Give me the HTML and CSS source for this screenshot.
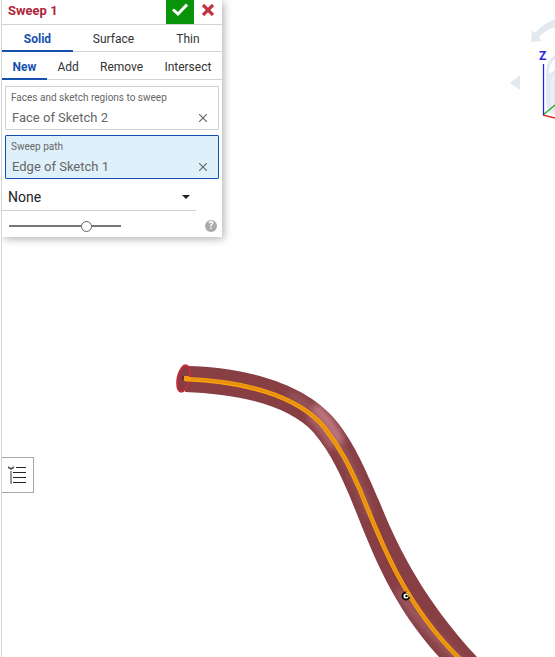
FILE: index.html
```html
<!DOCTYPE html>
<html lang="en">
<head>
<meta charset="utf-8">
<title>Sweep 1</title>
<link rel="stylesheet" href="styles.css">
</head>
<body>
<main class="workspace">
  <svg class="model" width="600" height="700" viewBox="0 0 600 700" role="img" aria-label="Swept tube">
    <defs>
      <filter id="soft" x="-50%" y="-50%" width="200%" height="200%"><feGaussianBlur stdDeviation="3"/></filter>
      <clipPath id="tube"><path d="M188 366C240 367 300 381 332 416C352 438 364 466 380 503C396 543 422 598 477 657L516 698H476L439 657C388 601 369 543 350 497C341 476 331 453 314 433C288 404 236 394 185 392Z"/></clipPath>
    </defs>
    <g clip-path="url(#tube)">
      <path fill="#873f44" d="M170 350H600V700H170Z"/>
      <g fill="none" filter="url(#soft)">
        <path stroke="#96575d" stroke-width="7" d="M290 394Q322 413 339 444T370 515"/>
        <path stroke="#c47c84" stroke-width="8" d="M315 406Q331 420 341 442"/>
        <path stroke="#b57078" stroke-width="5" d="M309 416Q322 428 332 448"/>
        <path stroke="#9c5a60" stroke-width="8" d="M398 590Q420 625 470 670"/>
      </g>
    </g>
    <ellipse cx="183.500" cy="378.500" rx="6" ry="13.500" transform="rotate(12 183.500 378.500)" fill="#873b43" stroke="#c92a38" stroke-width="1.800"/>
    <path fill="none" stroke="#fba50d" stroke-width="4.500" d="M185 379C240 381 296 394 324 427C342 450 350 468 360 490C378 534 402 602 458 657L500 698"/>
    <path fill="none" stroke="#e8910f" stroke-width="2.600" d="M190 379C240 381 296 394 324 427C342 450 350 468 360 490C378 534 402 602 458 657L500 698"/>
    <path fill="#6e2b31" d="M182 376h3v4h-3z"/>
    <path fill="#f29a0c" d="M184 376h5v5h-5z"/>
    <circle cx="406" cy="596" r="3.500" fill="#fff" stroke="#000" stroke-width="1.800"/>
    <circle cx="406.500" cy="596" r="1.200"/>
    <path fill="none" stroke="#f5a623" stroke-width="2" d="M406 592q4 1 4 5"/>
  </svg>

  <svg class="view-cube" width="55" height="130" viewBox="0 0 55 130" role="img" aria-label="View orientation">
    <path fill="#e3eaef" d="M10 83l10-8v15zM31 42l1-12 3 3Q44 23 55 19v8Q46 30 39 37l3 4z"/>
    <path fill="#e3eaef" fill-rule="evenodd" d="M55 55Q46 60 46 74V104Q47 112 55 114zM55 59V69Q52 73 49 73Q49 63 55 59z"/>
    <path fill="none" stroke="#f7f9fb" stroke-width="1" d="M52 114V82Q52 77 55 75"/>
    <path stroke="#35b035" stroke-width="1.500" d="M43 115l12-10"/>
    <path stroke="#e03030" stroke-width="1.500" d="M43 115l12 3"/>
    <path stroke="#2828d8" stroke-width="1.300" d="M43.500 64v51"/>
    <text class="axis" x="39" y="60">Z</text>
  </svg>

  <form class="dialog">
    <header class="title-bar">
      <h1>Sweep 1</h1>
      <button class="accept" type="button" aria-label="Accept"><svg width="16" height="14" viewBox="0 0 16 14"><path fill="none" stroke="#fff" stroke-width="3" d="M1 6.500l5 4.500 9-9.500"/></svg></button>
      <button class="cancel" type="button" aria-label="Cancel"><svg width="12" height="12" viewBox="0 0 12 12"><path stroke="#c22f3d" stroke-width="3.200" d="M1 1l10 10M11 1L1 11"/></svg></button>
    </header>
    <nav class="tabs">
      <button class="tab selected body-tab" type="button">Solid</button>
      <button class="tab body-tab wide" type="button">Surface</button>
      <button class="tab body-tab narrow" type="button">Thin</button>
    </nav>
    <nav class="tabs operations">
      <button class="tab selected" type="button">New</button>
      <button class="tab" type="button">Add</button>
      <button class="tab" type="button">Remove</button>
      <button class="tab" type="button">Intersect</button>
    </nav>
    <section class="queries">
      <div class="query">
        <h2>Faces and sketch regions to sweep</h2>
        <div class="entry"><span>Face of Sketch 2</span><button type="button" aria-label="Remove Face of Sketch 2"><svg width="8" height="8" viewBox="0 0 8 8"><path stroke="#666" stroke-width="1.200" d="M0 0l8 8M8 0L0 8"/></svg></button></div>
      </div>
      <div class="query active">
        <h2>Sweep path</h2>
        <div class="entry"><span>Edge of Sketch 1</span><button type="button" aria-label="Remove Edge of Sketch 1"><svg width="8" height="8" viewBox="0 0 8 8"><path stroke="#666" stroke-width="1.200" d="M0 0l8 8M8 0L0 8"/></svg></button></div>
      </div>
    </section>
    <div class="profile">
      <select aria-label="Profile control"><option>None</option></select>
      <svg class="caret" width="8" height="4" viewBox="0 0 8 4"><path fill="#222" d="M0 0h8L4 4z"/></svg>
    </div>
    <footer class="bottom">
      <input type="range" min="0" max="100" value="71" aria-label="Preview opacity">
      <button class="help" type="button" aria-label="Help">?</button>
    </footer>
  </form>

  <button class="feature-list" type="button" aria-label="Feature list">
    <svg width="18" height="19" viewBox="0 0 18 19"><path fill="none" stroke="#555" stroke-width="1.800" d="M0 1l3 2 3-2"/><path stroke="#999" stroke-width="2" d="M3 5v13"/><path stroke="#222" stroke-width="1" d="M8 1.500h10M5 6.500h13M5 11.500h13M5 16.500h13"/></svg>
  </button>
</main>
</body>
</html>
```
FILE: styles.css
```css
* { box-sizing: border-box; }
body { margin: 0; background: #fff; color: #333; font-family: Roboto, "Liberation Sans", sans-serif; }
button { border: 0; padding: 0; background: none; font: inherit; color: inherit; }
h1, h2 { margin: 0; }
svg { display: block; }

.workspace { position: relative; min-height: 100vh; margin-left: 1px; border-left: 1px solid #d4d4d4; overflow: hidden; }
.model { position: absolute; top: 0; left: -2px; }
.view-cube { position: absolute; top: 0; right: 0; }
.axis { font: bold 12px Roboto, sans-serif; fill: #2828d8; }

.dialog { position: relative; width: 220px; background: #fff; box-shadow: 2px 2px 8px rgba(0, 0, 0, 0.3); }
.title-bar { display: flex; height: 25px; border-bottom: 1px solid #d2d2d2; }
.title-bar h1 { flex: 1; padding-left: 6px; font-size: 13px; line-height: 21px; font-weight: 700; color: #b1263a; }
.accept { display: flex; justify-content: center; width: 28px; padding-top: 3px; background: #099309; }
.cancel { display: flex; justify-content: center; width: 28px; padding-top: 4px; }

.tabs { display: flex; border-bottom: 1px solid #d2d2d2; }
.tab { flex: auto; height: 27px; margin-bottom: -1px; padding: 2px 10px 0; border-bottom: 2px solid transparent; font-size: 12px; line-height: 24px; }
.body-tab { flex: 70 0 0; }
.wide { flex-grow: 84; }
.narrow { flex-grow: 66; }
.operations { padding-top: 1px; }
.selected { border-bottom-color: #1651b0; color: #1651b0; font-weight: 700; }

.queries { display: grid; gap: 5px; padding: 6px 3px 0; }
.query { height: 44px; padding: 4px 5px 0; border: 1px solid #d0d0d0; border-radius: 1px; }
.query h2 { font-size: 10px; line-height: 14px; font-weight: 400; color: #666; }
.active { border-color: #1651b0; background: #def0fa; }
.entry { display: flex; justify-content: space-between; align-items: center; padding: 0 6px 0 1px; font-size: 13px; line-height: 26px; color: #666; }

.profile { display: flex; align-items: center; width: 194px; height: 32px; padding-top: 4px; border-bottom: 1px solid #d0d0d0; }
.profile select { flex: 1; appearance: none; border: 0; padding: 1px 6px 0; background: none; font: 14px Roboto, sans-serif; color: #222; }
.caret { margin-right: 6px; }
.bottom { display: flex; justify-content: space-between; align-items: center; height: 26px; padding: 4px 5px 0 7px; }
.bottom input { appearance: none; width: 112px; height: 12px; margin: 0; background: linear-gradient(#777, #777) center / 100% 2px no-repeat; }
.bottom input::-webkit-slider-thumb { appearance: none; width: 11px; height: 11px; border: 1px solid #666; border-radius: 50%; background: #fff; }
.help { width: 12px; height: 12px; border-radius: 50%; background: #aaa; color: #fff; font-size: 10px; line-height: 12px; font-weight: 700; }

.feature-list { position: absolute; left: -1px; top: 457px; padding: 8px 7px 7px; border: 1px solid #a8a8a8; border-left: 0; background: #fff; }
```
